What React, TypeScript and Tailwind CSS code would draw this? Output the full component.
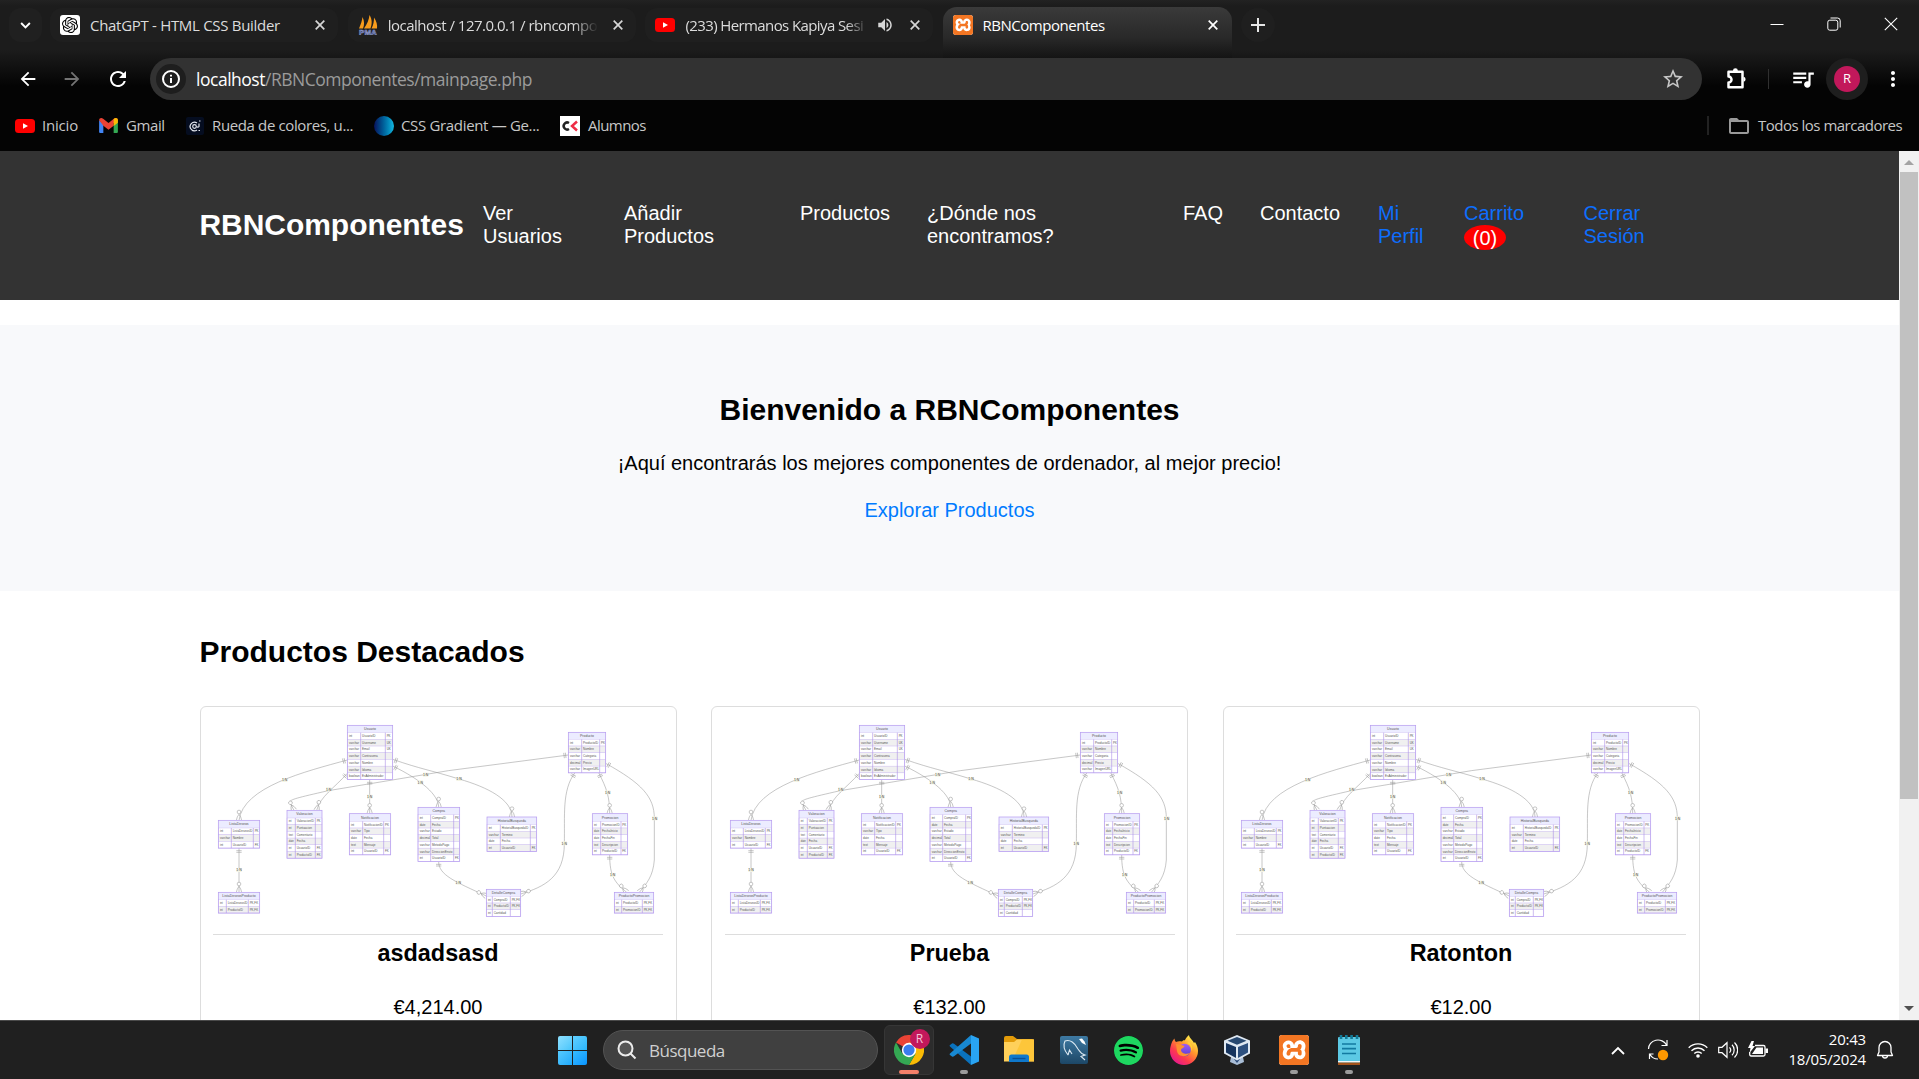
import type { ReactNode } from "react";
import { SiOpenai, SiXampp, SiSpotify } from "react-icons/si";
import { MdArrowBack, MdArrowForward, MdRefresh, MdStarOutline, MdQueueMusic, MdMoreVert, MdFolderOpen, MdVolumeUp } from "react-icons/md";

type Row = [string, string, string?];
type Entity = { name: string; x: number; y: number; w: number; c1: number; c2: number; head: number; rows: Row[] };

const ENTITIES: Entity[] = [
  { name: "Usuario", x: 457, y: 76, w: 136, c1: 497, c2: 571, head: 22, rows: [["int", "UsuarioID", "PK"], ["varchar", "Username", "UK"], ["varchar", "Email", "UK"], ["varchar", "Contrasena"], ["varchar", "Nombre"], ["varchar", "Idioma"], ["boolean", "EsAdministrador"]] },
  { name: "ListaDeseos", x: 70, y: 361, w: 124, c1: 109, c2: 175, head: 23, rows: [["int", "ListaDeseosID", "PK"], ["varchar", "Nombre"], ["int", "UsuarioID", "FK"]] },
  { name: "Valoracion", x: 276, y: 331, w: 105, c1: 301, c2: 361, head: 23, rows: [["int", "ValoracionID", "PK"], ["int", "Puntuacion"], ["text", "Comentario"], ["date", "Fecha"], ["int", "UsuarioID", "FK"], ["int", "ProductoID", "FK"]] },
  { name: "Notificacion", x: 463, y: 341, w: 124, c1: 503, c2: 566, head: 23, rows: [["int", "NotificacionID", "PK"], ["varchar", "Tipo"], ["date", "Fecha"], ["text", "Mensaje"], ["int", "UsuarioID", "FK"]] },
  { name: "Compra", x: 669, y: 322, w: 125, c1: 707, c2: 776, head: 22, rows: [["int", "CompraID", "PK"], ["date", "Fecha"], ["varchar", "Estado"], ["decimal", "Total"], ["varchar", "MetodoPago"], ["varchar", "DireccionEnvio"], ["int", "UsuarioID", "FK"]] },
  { name: "HistorialBusqueda", x: 876, y: 351, w: 149, c1: 916, c2: 1006, head: 23, rows: [["int", "HistorialBusquedaID", "PK"], ["varchar", "Termino"], ["date", "Fecha"], ["int", "UsuarioID", "FK"]] },
  { name: "Producto", x: 1120, y: 97, w: 112, c1: 1160, c2: 1214, head: 21, rows: [["int", "ProductoID", "PK"], ["varchar", "Nombre"], ["varchar", "Categoria"], ["decimal", "Precio"], ["varchar", "ImagenURL"]] },
  { name: "Promocion", x: 1192, y: 341, w: 106, c1: 1217, c2: 1278, head: 23, rows: [["int", "PromocionID", "PK"], ["date", "FechaInicio"], ["date", "FechaFin"], ["text", "Descripcion"], ["int", "ProductoID", "FK"]] },
  { name: "DetalleCompra", x: 874, y: 568, w: 103, c1: 892, c2: 946, head: 21, rows: [["int", "CompraID", "PK,FK"], ["int", "ProductoID", "PK,FK"], ["int", "Cantidad"]] },
  { name: "ProductoPromocion", x: 1258, y: 577, w: 118, c1: 1280, c2: 1342, head: 22, rows: [["int", "ProductoID", "PK,FK"], ["int", "PromocionID", "PK,FK"]] },
  { name: "ListaDeseosProducto", x: 70, y: 577, w: 124, c1: 94, c2: 160, head: 22, rows: [["int", "ListaDeseosID", "PK,FK"], ["int", "ProductoID", "PK,FK"]] },
];

const EDGES = [
  "M457 180 C330 215 145 260 132 361",
  "M457 220 C420 262 375 290 365 331",
  "M1120 165 L760 212 L400 272 C290 297 280 300 286 310 L297 331",
  "M524 239 V341",
  "M593 198 C680 240 731 285 731 322",
  "M593 178 C680 208 705 210 792 237 C880 262 951 300 951 351",
  "M132 444 V577",
  "M731 485 C731 525 780 545 874 588",
  "M1140 218 C1100 270 1110 350 1108 430 C1108 530 1050 560 977 582",
  "M1211 218 C1235 265 1244 290 1244 341",
  "M1244 464 C1244 530 1260 548 1295 577",
  "M1232 190 C1340 250 1378 290 1378 355 V480 C1374 530 1355 550 1333 577",
];

const LABELS = [[269, 240], [401, 268], [692, 224], [524, 290], [676, 247], [792, 237], [132, 510], [790, 548], [1108, 430], [1238, 277], [1253, 525], [1379, 355]];

/* Crow's feet: position and rotation, pointing down at 0 degrees */
const FEET = [[132, 361, 0], [365, 331, 15], [297, 331, -25], [524, 341, 0], [731, 322, 0], [951, 351, 0], [132, 577, 0], [874, 588, -65], [977, 582, 70], [1244, 341, 0], [1295, 577, -40], [1333, 577, 40]];
const BARS = [[457, 180, 75], [457, 220, 40], [1120, 165, 83], [524, 239, 0], [593, 198, -62], [593, 178, -70], [132, 444, 0], [731, 485, 0], [1140, 218, 30], [1211, 218, -25], [1244, 464, 0], [1232, 190, -62]];

function Diagram() {
  return (
    <svg viewBox="54 42 1350 660" className="block h-[220px] w-[450px]" fontFamily="Liberation Sans, sans-serif">
      <g fill="none" stroke="#959595" strokeWidth="1.6">
        {EDGES.map((d) => <path key={d} d={d} />)}
        {FEET.map(([x, y, r], i) => (
          <g key={i} transform={`translate(${x} ${y}) rotate(${r})`}>
            <path d="M-8 0 Q-6 -12 0 -18 Q6 -12 8 0" />
            <circle cy="-25" r="5.5" fill="#fff" />
          </g>
        ))}
        {BARS.map(([x, y, r], i) => (
          <path key={i} transform={`translate(${x} ${y}) rotate(${r})`} d="M-8 8 H8 M-8 13 H8" />
        ))}
      </g>
      {LABELS.map(([x, y], i) => (
        <g key={i}>
          <rect x={x - 8} y={y - 6} width="16" height="12" fill="#f4f4e4" />
          <text x={x} y={y + 4} fontSize="10.5" fill="#444" textAnchor="middle">1:N</text>
        </g>
      ))}
      {ENTITIES.map((e) => {
        const bottom = e.y + e.head + e.rows.length * 20.1;
        return (
          <g key={e.name} fill="#555">
            <rect x={e.x} y={e.y} width={e.w} height={bottom - e.y} fill="#fff" />
            <rect x={e.x} y={e.y} width={e.w} height={e.head} fill="#ececff" />
            <text x={e.x + e.w / 2} y={e.y + 15} fontSize="10.5" textAnchor="middle">{e.name}</text>
            {e.rows.map(([t, n, k], i) => {
              const y = e.y + e.head + i * 20.1;
              return (
                <g key={n}>
                  <rect x={e.x} y={y} width={e.w} height="20.1" fill={i % 2 ? "#f0f0f0" : "#fff"} stroke="#cdbef0" strokeWidth="1.3" />
                  <text x={e.x + 5} y={y + 13} fontSize={e.c1 - e.x < 30 ? 8 : 9}>{t}</text>
                  <text x={e.c1 + 4} y={y + 13} fontSize={n.length > 14 ? 8.8 : 9.2}>{n}</text>
                  {k && <text x={e.c2 + 4} y={y + 13} fontSize={8.8}>{k}</text>}
                </g>
              );
            })}
            <path d={`M${e.c1} ${e.y + e.head}V${bottom}M${e.c2} ${e.y + e.head}V${bottom}`} stroke="#ad90e8" strokeWidth="1.8" />
            <rect x={e.x} y={e.y} width={e.w} height={bottom - e.y} fill="none" stroke="#b79df0" strokeWidth="2.2" />
          </g>
        );
      })}
    </svg>
  );
}

function YouTubeIcon() {
  return (
    <svg viewBox="0 0 20 20" className="size-5 shrink-0">
      <rect y="3" width="20" height="14" rx="3.5" fill="#f00" />
      <path d="M8 7.2 13 10 8 12.8Z" fill="#fff" />
    </svg>
  );
}

function XamppIcon({ className }: { className: string }) {
  return (
    <span className={`flex shrink-0 items-center justify-center overflow-hidden bg-white ${className}`}>
      <SiXampp className="size-full scale-[1.04] text-[#f37623]" />
    </span>
  );
}

function TabClose({ bright }: { bright?: boolean }) {
  return (
    <svg viewBox="0 0 10 10" className="size-[10px] shrink-0" stroke={bright ? "#fff" : "#d6d6d6"} strokeWidth="1.7">
      <path d="M.7.7 9.3 9.3M9.3.7.7 9.3" />
    </svg>
  );
}

function Tab({ icon, title, audio, fade }: { icon: ReactNode; title: ReactNode; audio?: boolean; fade?: boolean }) {
  return (
    <div className="mt-2 flex h-[34px] w-[288px] shrink-0 items-center rounded-xl bg-[#1f1f1f] pr-[13px] pl-[10px]">
      {icon}
      <div className={`ml-[10px] min-w-0 flex-1 whitespace-nowrap text-[#dcdcdc] ${fade ? "[mask-image:linear-gradient(to_right,#000_88%,transparent)]" : ""}`}>{title}</div>
      {audio && <MdVolumeUp className="mr-[16px] ml-[8px] size-[18px] shrink-0 text-[#d6d6d6]" />}
      <div className={audio ? "" : "ml-[15px] flex"}><TabClose /></div>
    </div>
  );
}

function TabStrip() {
  return (
    <div className="flex h-[58px] shrink-0 items-start text-[15px]">
      <div className="mt-2 ml-[9px] flex h-[34px] w-[33px] items-center justify-center rounded-xl bg-[#202020]">
        <svg viewBox="0 0 12 8" className="h-[7px] w-[11px]" fill="none" stroke="#fff" strokeWidth="2.2"><path d="M1 1.2 6 6.2 11 1.2" /></svg>
      </div>
      <div className="ml-2 flex gap-[9.7px]">
        <Tab
          icon={<span className="flex size-5 shrink-0 items-center justify-center rounded-[3px] bg-white"><SiOpenai className="size-4 text-black" /></span>}
          title={<span className="tracking-[-0.3px]">ChatGPT - HTML CSS Builder</span>}
        />
        <Tab
          fade
          icon={
            <svg viewBox="0 0 20 20" className="size-5 shrink-0">
              <path d="M1 13.500C3 9 4 6 4.500 2 6.500 6 6.500 10 5 13.500ZM6 13.500C9 9 11 5 11.500 0 14.500 5 14 9 12.500 13.500ZM13.500 13.500C15.500 10 16 6 16 2.500 18.500 6 19.500 10 19 13.500Z" fill="#f89c1c" />
              <text x="10" y="19.500" fontSize="8" fontWeight="700" textAnchor="middle" fill="#34407a" stroke="#9ba6d8" strokeWidth=".5" fontFamily="Liberation Sans, sans-serif">PMA</text>
            </svg>
          }
          title={<span className="tracking-[-0.5px]">localhost / 127.0.0.1 / rbncompo</span>}
        />
        <Tab fade audio icon={<YouTubeIcon />} title={<span className="tracking-[-0.6px]">(233) Hermanos Kapiya Sesi</span>} />
      </div>
      <div className="mt-[7px] ml-[10px] flex h-[51px] w-[289px] shrink-0 items-start rounded-t-[14px] bg-linear-to-b from-[#3a3a3a] via-[#292929] via-60% to-[#141414] pr-[14px] pl-[10px]">
        <div className="flex h-9 flex-1 items-center">
          <XamppIcon className="size-5 rounded-[3px]" />
          <span className="ml-[9px] flex-1 tracking-[-0.45px] text-white">RBNComponentes</span>
          <TabClose bright />
        </div>
      </div>
      <div className="mt-2 ml-[9px] flex size-[34px] items-center justify-center rounded-full bg-[#1f1f1f]">
        <svg viewBox="0 0 14 14" className="size-[14px]" stroke="#e6e6e6" strokeWidth="2"><path d="M7 0V14M0 7H14" /></svg>
      </div>
      <div className="mt-[17px] ml-auto flex items-center gap-[43px] pr-[21px]">
        <svg viewBox="0 0 14 14" className="size-[14px]" stroke="#fff" fill="none"><path d="M.5 7.500H13.500" /></svg>
        <svg viewBox="0 0 14 14" className="size-[14px]" stroke="#fff" fill="none"><rect x=".8" y="3.200" width="10" height="10" rx="2" /><path d="M3.500 1H10.500A2.700 2.700 0 0 1 13.200 3.700V10.500" /></svg>
        <svg viewBox="0 0 14 14" className="size-[14px]" stroke="#fff" strokeWidth="1.100"><path d="M.8.8 13.200 13.200M13.200.8.8 13.200" /></svg>
      </div>
    </div>
  );
}

function Toolbar() {
  return (
    <div className="flex h-[42px] shrink-0 items-center text-white">
      <MdArrowBack className="ml-[17px] size-[22px]" />
      <MdArrowForward className="ml-[22px] size-[22px] text-[#747474]" />
      <MdRefresh className="ml-[23px] size-6" />
      <div className="ml-[20px] flex h-[42px] w-[1552px] items-center rounded-full bg-[#323232] pl-[6px]">
        <span className="flex size-[30px] items-center justify-center rounded-full bg-[#1e1e1e]">
          <svg viewBox="0 0 18 18" className="size-[18px]" fill="none" stroke="#fff" strokeWidth="2"><circle cx="9" cy="9" r="8" /><path d="M9 8V13M9 4.700V6.500" /></svg>
        </span>
        <span className="ml-[10px] flex-1 text-[17.5px] tracking-[-0.48px] text-[#9b9b9b]"><span className="text-white">localhost</span>/RBNComponentes/mainpage.php</span>
        <MdStarOutline className="mr-[17px] size-6 text-[#c7c7c7]" />
      </div>
      <svg viewBox="0 0 24 24" className="ml-[22px] size-6" fill="none" stroke="#fff" strokeWidth="2.500">
        <path d="M4.500 4.700H18.500V20.300H4.500V15.500A3 3 0 0 0 4.500 9.500Z" strokeLinejoin="round" />
        <path d="M9 4V3.600A2.400 2.400 0 0 1 13.800 3.600V4ZM19.500 9.700A2.600 2.600 0 0 1 19.500 14.800Z" fill="#fff" stroke="none" />
      </svg>
      <span className="ml-[20px] h-5 w-px bg-[#303030]" />
      <MdQueueMusic className="ml-[21px] size-[26px]" />
      <span className="ml-[10px] flex size-[42px] items-center justify-center rounded-full bg-[#1e1e1e]">
        <span className="flex size-[26px] items-center justify-center rounded-full bg-[#c2185b] text-[13px]">R</span>
      </span>
      <MdMoreVert className="ml-[12.500px] size-6" />
    </div>
  );
}

function Bookmarks() {
  return (
    <div className="flex h-[51px] shrink-0 items-center text-[15px] text-[#c7c7c7]">
      <span className="ml-[15px] flex w-[84px] items-center gap-[7px] tracking-[-0.2px]"><YouTubeIcon />Inicio</span>
      <span className="flex w-[87px] items-center gap-[8px] tracking-[-0.4px]">
        <svg viewBox="0 0 20 16" className="h-[15px] w-[19px]">
          <path d="M0 2V14.500A1.300 1.300 0 0 0 1.300 16H4.500V7Z" fill="#4285f4" /><path d="M15.500 7V16H18.700A1.300 1.300 0 0 0 20 14.500V2Z" fill="#34a853" />
          <path d="M0 2.500C0 0 2.500-.7 4.300.8L10 5.200 15.700.8C17.500-.7 20 0 20 2.500L15.500 5.500V8.300L10 12.500 4.500 8.300Z" fill="#ea4335" /><path d="M15.500 1C17.500-.7 20 0 20 2.500V5L15.500 8.500Z" fill="#fbbc04" />
        </svg>
        Gmail
      </span>
      <span className="flex w-[188px] items-center gap-[8px] tracking-[-0.37px] whitespace-nowrap">
        <svg viewBox="0 0 18 18" className="size-[18px] shrink-0" fill="none" stroke="#e4e8ef" strokeWidth="1.200"><rect width="18" height="18" rx="2" fill="#050d20" stroke="none" /><circle cx="8.500" cy="9.500" r="1.800" /><path d="M11 6A4.300 4.300 0 1 0 11 13M10.500 9.500A1.500 1.500 0 0 0 13 9.500V6.500M13 4H14.500M12.500 13.500H14" /></svg>
        Rueda de colores, u...
      </span>
      <span className="flex w-[186px] items-center gap-[7px] tracking-[-0.33px] whitespace-nowrap">
        <span className="size-5 shrink-0 rounded-full bg-linear-to-r from-[#08105c] to-[#14b8e0]" />CSS Gradient — Ge...
      </span>
      <span className="flex items-center gap-[8px] tracking-[-0.55px]">
        <svg viewBox="0 0 20 20" className="size-5" fill="none" strokeWidth="2.500"><rect width="20" height="20" fill="#fff" /><path d="M9 7A3.500 3.500 0 1 0 9 13" stroke="#222" /><path d="M17 5.500 12 10 17 14.500" stroke="#ee2c45" /></svg>
        Alumnos
      </span>
      <span className="ml-auto h-[19px] w-[2px] bg-[#222]" />
      <MdFolderOpen className="ml-[18px] size-6 text-[#9a9a9a]" />
      <span className="ml-[7px] w-[161px] tracking-[-0.5px] whitespace-nowrap">Todos los marcadores</span>
    </div>
  );
}

function SiteHeader() {
  return (
    <header className="flex h-[149px] shrink-0 bg-[#333] pl-[199.500px] text-[20px] leading-[23px] text-white">
      <h1 className="mt-[57px] w-[283.500px] text-[30px] leading-[34px] font-bold tracking-[-0.05px]">RBNComponentes</h1>
      <nav className="mt-[51px] flex">
        <a className="w-[141px]">Ver<br />Usuarios</a>
        <a className="w-[176px]">Añadir<br />Productos</a>
        <a className="w-[127px]">Productos</a>
        <a className="w-[256px]">¿Dónde nos<br />encontramos?</a>
        <a className="w-[77px]">FAQ</a>
        <a className="w-[118px]">Contacto</a>
        <a className="w-[86px] text-[#0d6efd]">Mi<br />Perfil</a>
        <a className="w-[119.500px] text-[#0d6efd]">Carrito<span className="flex h-[25px] w-[42px] items-center justify-center rounded-[50%] bg-[#f00] pt-[2px] text-white">(0)</span></a>
        <a className="text-[#0d6efd]">Cerrar<br />Sesión</a>
      </nav>
    </header>
  );
}

function ProductCard({ name, price }: { name: string; price: string }) {
  return (
    <article className="flex h-[420px] w-[477px] shrink-0 flex-col items-center rounded-md border border-[#ddd] pt-[7px]">
      <div className="border-b border-[#ddd]"><Diagram /></div>
      <h3 className="mt-[5px] text-[23.4px] leading-[27px] font-bold">{name}</h3>
      <p className="mt-[29px] leading-[23px]">{price}</p>
    </article>
  );
}

function Page() {
  return (
    <div className="flex min-h-0 flex-1 bg-white font-['Liberation_Sans',Arial,sans-serif] text-[20px] text-black">
      <main className="flex flex-1 flex-col overflow-hidden">
        <SiteHeader />
        <section className="mt-[25px] flex h-[266px] shrink-0 flex-col items-center bg-[#f8f9fb] pt-[68px]">
          <h2 className="text-[30px] leading-[34px] font-bold">Bienvenido a RBNComponentes</h2>
          <p className="mt-[25px] leading-[23px]">¡Aquí encontrarás los mejores componentes de ordenador, al mejor precio!</p>
          <a className="mt-[24px] leading-[23px] text-[#007bff]">Explorar Productos</a>
        </section>
        <section className="shrink-0 px-[199.500px] pt-[44px]">
          <h2 className="text-[30px] leading-[34px] font-bold">Productos Destacados</h2>
          <div className="mt-[37px] flex gap-[34.500px]">
            <ProductCard name="asdadsasd" price="€4,214.00" />
            <ProductCard name="Prueba" price="€132.00" />
            <ProductCard name="Ratonton" price="€12.00" />
          </div>
        </section>
      </main>
      <div className="flex w-5 flex-col items-center bg-[#f1f1f1]">
        <span className="mt-[9px] border-x-[5px] border-b-[5px] border-x-transparent border-b-[#a3a3a3]" />
        <span className="mt-[7px] h-[627px] w-[18px] bg-[#c1c1c1]" />
        <span className="mt-auto mb-[9px] border-x-[5px] border-t-[5px] border-x-transparent border-t-[#505050]" />
      </div>
    </div>
  );
}

function TaskApp({ children, mark, active }: { children: ReactNode; mark?: boolean; active?: boolean }) {
  return (
    <div className="flex w-[55px] shrink-0 justify-center">
      <div className={`relative flex size-[50px] items-center justify-center rounded-md ${active ? "border border-[#363636] bg-[#2c2c2c]" : ""}`}>
        {children}
        {active && <span className="absolute bottom-0 h-1 w-5 rounded-full bg-[#f4806a]" />}
        {mark && <span className="absolute bottom-[1px] h-1 w-2 rounded-full bg-[#9b9b9b]" />}
      </div>
    </div>
  );
}

function Taskbar() {
  return (
    <footer className="flex h-[59px] shrink-0 items-center border-t border-[#4a4a4a] bg-[#202020] text-white">
      <div className="ml-[558px] grid size-[29px] grid-cols-2 gap-[1px]">
        <span className="rounded-tl-[2px] bg-linear-to-br from-[#8de0ff] to-[#45c5fb]" />
        <span className="rounded-tr-[2px] bg-linear-to-br from-[#5fd0ff] to-[#27b5fb]" />
        <span className="rounded-bl-[2px] bg-linear-to-br from-[#55cbff] to-[#1ca9fb]" />
        <span className="rounded-br-[2px] bg-linear-to-br from-[#35bcff] to-[#0794ff]" />
      </div>
      <div className="ml-4 flex h-10 w-[275px] items-center rounded-full border border-[#535353] bg-[#404040] pl-[13px]">
        <svg viewBox="0 0 20 20" className="size-5" fill="none" stroke="#ececec" strokeWidth="2"><circle cx="8.500" cy="8.500" r="7" fill="#555" /><path d="M13.500 13.500 18.500 18.500" /></svg>
        <span className="ml-[12px] pt-px text-[17px] tracking-[-0.5px] text-[#d0d0d0]">Búsqueda</span>
      </div>
      <div className="ml-[3px] flex">
        <TaskApp active>
          <svg viewBox="0 0 30 30" className="size-[30px]">
            <path d="M15 15 2 7.500A15 15 0 0 1 28 7.500Z" fill="#ea4335" />
            <path d="M15 15 28 7.500A15 15 0 0 1 15 30L21.500 18.700Z" fill="#fbbc05" />
            <path d="M15 15 21.500 18.700 15 30A15 15 0 0 1 2 7.500L8.500 18.700Z" fill="#34a853" />
            <path d="M15 8H28.300L28 7.500H15Z" fill="#fbbc05" />
            <circle cx="15" cy="15" r="7.200" fill="#fff" /><circle cx="15" cy="15" r="5.600" fill="#3b7ded" />
          </svg>
          <span className="absolute top-[3px] right-[3px] flex size-5 items-center justify-center rounded-full bg-[#c2185b] text-[12px] text-[#f5c3d8]">R</span>
        </TaskApp>
        <TaskApp mark>
          <svg viewBox="0 0 30 30" className="size-[30px]">
            <path d="M22 30 1 11.500Q0 10.700 1 10L3 8.500Q4 8 5 8.700L22 21.500Z" fill="#0a72bd" />
            <path d="M22 0 1 18.500Q0 19.300 1 20L3 21.500Q4 22 5 21.300L22 8.500Z" fill="#1889d2" />
            <path d="M22 0 30 3.500V26.500L22 30Z" fill="#29a4f3" />
          </svg>
        </TaskApp>
        <TaskApp>
          <svg viewBox="0 0 30 28" className="h-7 w-[30px]">
            <path d="M0 2Q0 0 2 0H9L13 3H28Q30 3 30 5V10H0Z" fill="#e39b09" />
            <path d="M0 6H10L13 3.500H30V25.500H0Z" fill="#ffd05a" /><path d="M18 3.500H30V25.500H8Z" fill="#fcc22c" opacity=".7" />
            <path d="M5 26V21Q5 18.500 7.500 18.500H22.500Q25 18.500 25 21V26Z" fill="#0f78cb" /><path d="M8.500 22.500H21.500" stroke="#0a4f96" strokeWidth="1.400" />
          </svg>
        </TaskApp>
        <TaskApp>
          <svg viewBox="0 0 28 28" className="size-7">
            <defs><linearGradient id="wb" x2="0" y2="1"><stop stopColor="#3e7aa3" /><stop offset="1" stopColor="#1d4766" /></linearGradient></defs>
            <rect width="28" height="28" rx="2" fill="url(#wb)" />
            <path d="M8 19C4 14 3 9 5 5 10 3 15 7 18 13 20 16 21 18 25 19L21 20.500 25 24M8 19 9.500 14 12 18" fill="none" stroke="#dce9f2" strokeWidth="1.100" />
            <path d="M19 3 22 2.500 24.500 5.500 26 9 22 7Z" fill="#fff" />
          </svg>
        </TaskApp>
        <TaskApp>
          <span className="flex size-[29px] items-center justify-center rounded-full bg-black"><SiSpotify className="size-[29px] text-[#1ed760]" /></span>
        </TaskApp>
        <TaskApp>
          <svg viewBox="0 0 30 30" className="size-[30px]">
            <defs>
              <linearGradient id="ff" x1=".85" y1=".1" x2=".2" y2=".95"><stop stopColor="#fff44f" /><stop offset=".35" stopColor="#ff9a2b" /><stop offset=".7" stopColor="#ff3a4e" /><stop offset="1" stopColor="#e5188f" /></linearGradient>
              <linearGradient id="fp" x2="0" y2="1"><stop stopColor="#a05cf6" /><stop offset="1" stopColor="#5b3fd0" /></linearGradient>
            </defs>
            <path d="M3 7C4 5 5 4 5.500 3.500 5.600 5 6 6 7 7 9 6 11 6 13 6.500 14 5 16 4 15.500 6 17 3 18 1.500 20 0 20 3 24 5 25 8L26 7C28 10 29 13 29 16A14 14 0 0 1 1 16C1 12 2 10 3 7Z" fill="url(#ff)" />
            <circle cx="15.500" cy="15" r="6.300" fill="url(#fp)" />
            <path d="M7 9C10 9 12 10 15.500 11 15 13 12 13.500 12 15 12 18 17 20 21 18 17 23 9 22 8 16Z" fill="#ff9130" />
            <path d="M18 8C21 9 23 12 22 16 24 14 24 10 20 7Z" fill="#ffcf38" />
          </svg>
        </TaskApp>
        <div className="mr-[1px] -ml-[2px]">
          <TaskApp>
            <svg viewBox="0 0 26 30" className="h-[30px] w-[26px]">
              <path d="M7 22H19L20 27 13 30 6 27Z" fill="#a9bdd6" /><path d="M10 24 13 28 16 24" fill="#294878" />
              <path d="M13 0 26 5.500V18.500L13 25.500 0 18.500V5.500Z" fill="#dfe8f2" />
              <path d="M13 2 22.500 5.700 13 9.700 3.500 5.700Z" fill="#274870" /><path d="M2 8 12 12V23L2 17.500Z" fill="#16345e" /><path d="M24 8 14 12V23L24 17.500Z" fill="#2d507f" />
            </svg>
          </TaskApp>
        </div>
        <div className="ml-[1px]"><TaskApp mark><XamppIcon className="size-[30px] rounded-[3px]" /></TaskApp></div>
        <TaskApp mark>
          <svg viewBox="0 0 22 30" className="h-[30px] w-[22px]">
            <rect y="2" width="22" height="26" rx="1" fill="#5cc9e4" /><path d="M0 26H22V27.500H0Z" fill="#f5f5f5" /><path d="M0 27.500H22V30H0Z" fill="#a4531b" />
            <path d="M4 9H18M4 13.700H18M4 18.500H18" stroke="#127aa0" strokeWidth="1.700" />
            <path d="M3 0V4M8.300 0V4M13.600 0V4M19 0V4" stroke="#127a98" strokeWidth="2.600" />
          </svg>
        </TaskApp>
      </div>
      <svg viewBox="0 0 14 9" className="ml-auto h-[9px] w-[14px]" fill="none" stroke="#fff" strokeWidth="1.800"><path d="M1 8 7 2 13 8" /></svg>
      <svg viewBox="0 0 22 22" className="ml-[22px] size-[22px]" fill="none" stroke="#fff" strokeWidth="1.200">
        <path d="M1.500 10A9.500 9 0 0 1 19.500 6M20 1V6.500H14.500M6.500 15H2.500V20M3 15.500A9 9 0 0 0 11 20" /><circle cx="16" cy="16" r="5.200" fill="#ff9800" stroke="none" />
      </svg>
      <svg viewBox="0 0 20 16" className="ml-[19px] h-4 w-5" fill="none" stroke="#fff" strokeWidth="1.400"><path d="M.7 5.800A13 13 0 0 1 19.300 5.800M3.500 8.800A9 9 0 0 1 16.500 8.800M6.300 11.600A5.200 5.200 0 0 1 13.700 11.600" /><circle cx="10" cy="14" r="1.800" fill="#fff" stroke="none" /></svg>
      <svg viewBox="0 0 20 18" className="ml-[10px] h-[18px] w-5" fill="none" stroke="#fff" strokeWidth="1.200"><path d="M.7 6.300H4L9 1.700V16.300L4 11.700H.7ZM11.500 6.300A4 4 0 0 1 11.500 11.700M14 3.800A7.300 7.300 0 0 1 14 14.200M16.500 1.500A10.500 10.500 0 0 1 16.500 16.500" /></svg>
      <svg viewBox="0 0 20 18" className="ml-[10px] h-[18px] w-5" fill="none" stroke="#fff" strokeWidth="1.300"><path d="M7 4.500H15.500A1.500 1.500 0 0 1 17 6V13.500A1.500 1.500 0 0 1 15.500 15H3A1.500 1.500 0 0 1 1.700 13.500V11" /><path d="M8.500 6.500H15V13H4Z" fill="#fff" stroke="none" /><path d="M17.500 7.500H20V12H17.500Z" fill="#fff" stroke="none" /><path d="M3.500 0 0 7H2.500L1.500 12 7 5H4.500L6 0Z" fill="#fff" stroke="none" /></svg>
      <div className="ml-[19px] w-[79px] pb-[2px] text-right text-[15px] leading-5 tracking-[-0.2px] whitespace-nowrap">20:43<br />18/05/2024</div>
      <svg viewBox="0 0 18 20" className="mr-[25px] ml-[10px] h-5 w-[18px]" fill="none" stroke="#fff" strokeWidth="1.300"><path d="M1.500 15.500 3 12V7.500A6 6 0 0 1 15 7.500V12L16.500 15.500ZM6.500 15.500A2.500 2.500 0 0 0 11.500 15.500" strokeLinejoin="round" /></svg>
    </footer>
  );
}

export default function App() {
  return (
    <div className="flex h-[1079px] w-[1919px] flex-col overflow-hidden font-['Open_Sans','Noto_Sans',sans-serif]">
      <div className="flex h-[151px] shrink-0 flex-col bg-[linear-gradient(#222_0,#1c1c1c_6px,#1c1c1c_50px,#040404_86px)]">
        <TabStrip />
        <Toolbar />
        <Bookmarks />
      </div>
      <Page />
      <Taskbar />
    </div>
  );
}
